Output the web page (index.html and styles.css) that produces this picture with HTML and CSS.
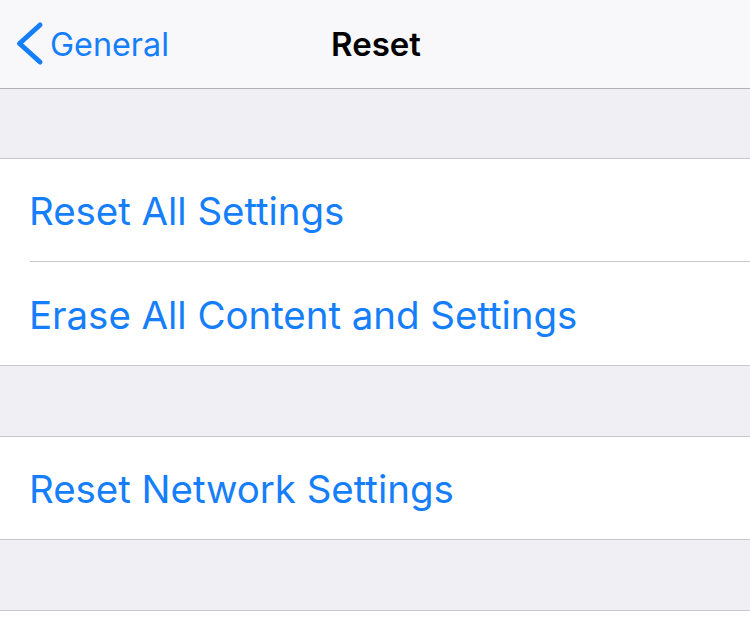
FILE: index.html
```html
<!DOCTYPE html>
<html>
<head>
<meta charset="utf-8">
<link rel="stylesheet" href="styles.css">
</head>
<body>
<div class="nav">
  <div class="back">
    <svg class="chev" width="40" height="48" viewBox="0 0 40 48"><path d="M30 5 L9.5 23.5 L30 42" fill="none" stroke="#157efb" stroke-width="5" stroke-linecap="round" stroke-linejoin="round"/></svg>
    <span class="back-label">General</span>
  </div>
  <div class="title">Reset</div>
</div>
<div class="gap first"></div>
<div class="group">
  <div class="row"><span class="label">Reset All Settings</span></div>
  <div class="row"><span class="label">Erase All Content and Settings</span></div>
</div>
<div class="gap"></div>
<div class="group">
  <div class="row"><span class="label">Reset Network Settings</span></div>
</div>
<div class="gap"></div>
</body>
</html>
```
FILE: styles.css
```css
html, body { margin: 0; padding: 0; }
body { background: #ffffff; width: 750px; height: 617px; overflow: hidden; font-family: Inter, "Liberation Sans", sans-serif; }
.nav { height: 88px; background: #f8f8fa; border-bottom: 1px solid #b2b2b2; display: flex; align-items: center; position: relative; }
.back { display: flex; align-items: center; padding-left: 10px; color: #157efb; }
.chev { display: block; }
.back-label { font-size: 32.3px; }
.title { position: absolute; left: 0; right: 0; text-align: center; font-size: 33px; font-weight: 600; color: #000; pointer-events: none; padding-left: 2px; }
.gap { height: 70px; background: #efeff4; border-bottom: 1px solid #c8c7cc; }
.gap.first { height: 69px; }
.group { border-bottom: 1px solid #c8c7cc; padding-left: 30px; }
.row { height: 102px; display: flex; align-items: center; color: #157efb; font-size: 38.5px; }
.row + .row { border-top: 1px solid #c8c7cc; height: 103px; }
.label { margin-left: -1px; padding-top: 2px; letter-spacing: -0.05px; }
```
